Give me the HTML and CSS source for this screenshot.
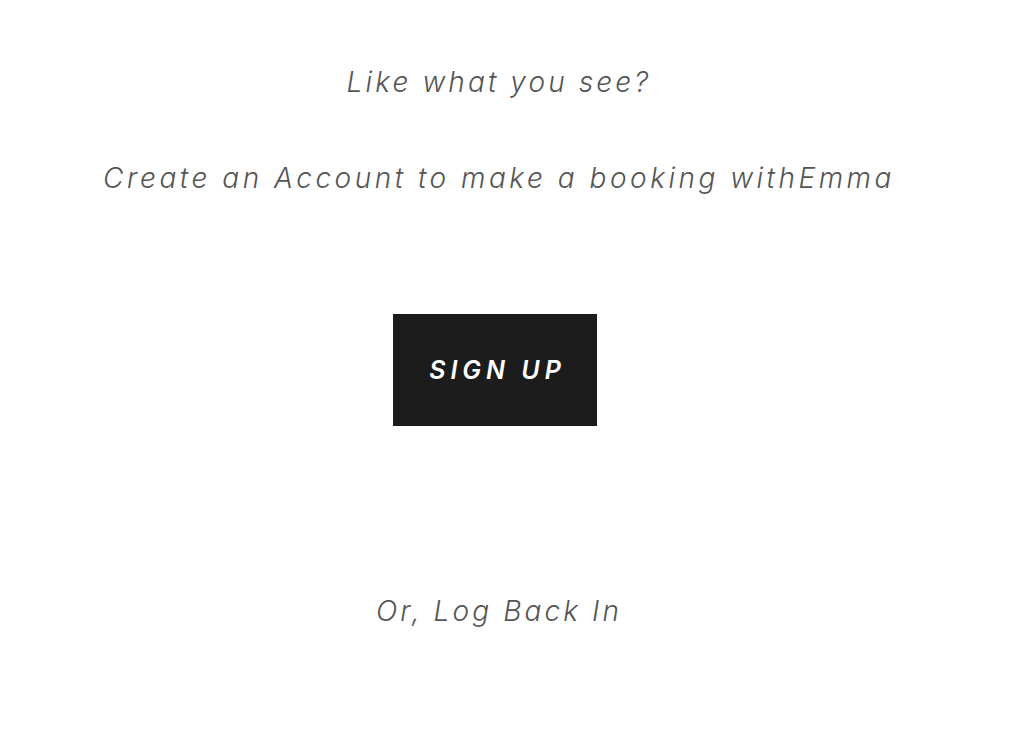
FILE: index.html
```html
<!DOCTYPE html>
<html>
<head>
<meta charset="utf-8">
<link rel="stylesheet" href="styles.css">
</head>
<body>
<main class="page">
  <p class="line first">Like what you see?</p>
  <p class="line second">Create an Account to make a booking withEmma</p>
  <a class="signup" href="#">SIGN UP</a>
  <p class="line login">Or, Log Back In</p>
</main>
</body>
</html>
```

FILE: styles.css
```css
html, body {
  margin: 0;
  padding: 0;
  background: #ffffff;
}
.page {
  width: 998px;
  display: flex;
  flex-direction: column;
  align-items: center;
  font-family: "Inter", "Open Sans", sans-serif;
  font-style: italic;
  color: #555555;
}
.line {
  margin: 0;
  font-size: 28px;
  line-height: 36px;
  letter-spacing: 3.1px;
  font-weight: 350;
}
.first {
  margin-top: 64px;
}
.second {
  margin-top: 60px;
  letter-spacing: 3.5px;
}
.signup {
  margin-top: 118px;
  width: 204px;
  height: 112px;
  background: #1c1c1c;
  color: #ffffff;
  text-decoration: none;
  display: flex;
  align-items: center;
  justify-content: center;
  font-size: 25px;
  font-weight: 600;
  letter-spacing: 5px;
  text-indent: 5px;
  margin-left: -8px;
}
.login {
  margin-top: 167px;
}
```
